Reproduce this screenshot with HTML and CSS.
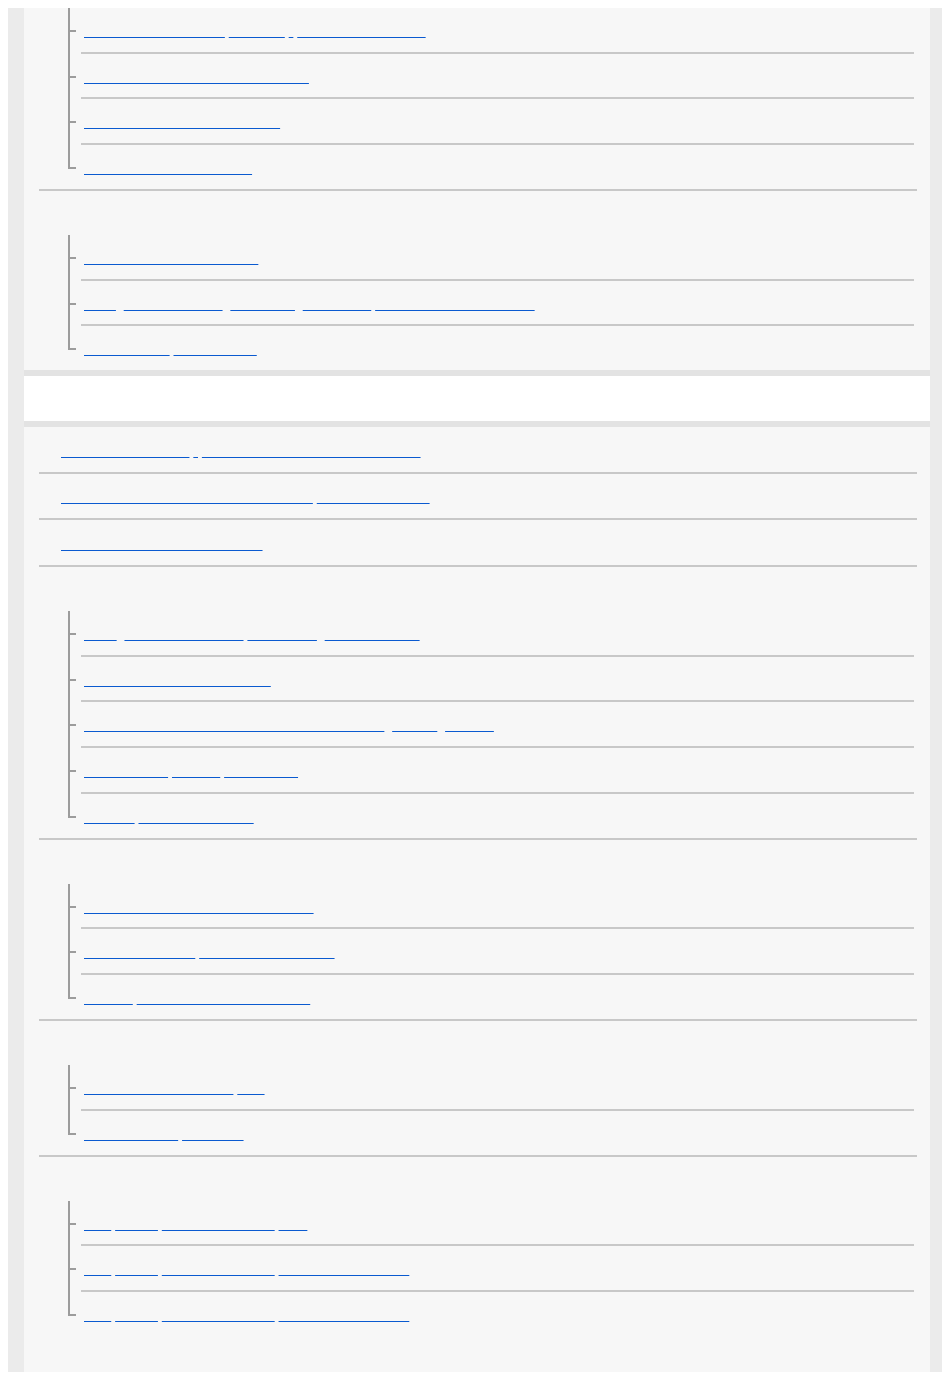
FILE: index.html
```html
<!DOCTYPE html>
<html lang="en">
<head>
  <meta charset="UTF-8">
  <meta name="viewport" content="width=device-width, initial-scale=1.0">
  <title>Help Guide - Contents</title>
  <link rel="stylesheet" href="styles.css">
</head>
<body>

  <div class="page">

    <div class="panel">
      <ul class="groups">
        <li class="group">
          <ul class="tree">
            <li><a href="#"><span>Registering Frequently</span> <span>functions</span> <span>-</span> <span>Custom Key settings</span></a></li>
            <li><a href="#"><span>Assigning selected functions to keys</span></a></li>
            <li><a href="#"><span>Using the Fn (Function) buttons</span></a></li>
            <li><a href="#"><span>Using the MENU button list</span></a></li>
          </ul>
        </li>
        <li class="group">
          <div class="group-title">Shooting modes</div>
          <ul class="tree">
            <li><a href="#"><span>Selecting a Shooting modes</span></a></li>
            <li><a href="#"><span>iAuto</span>, <span>Intelligent Autos</span>, <span>Panorama</span>, <span>Landscape</span> <span>Shutter Speed Priority (S)</span></a></li>
            <li><a href="#"><span>Program Auto</span> <span>Movie modes</span></a></li>
          </ul>
        </li>
      </ul>
    </div>

    <div class="band">Using network functions</div>

    <div class="panel panel-bottom">
      <ul class="groups">
        <li class="group link-row"><a href="#"><span>Changing the setting</span> <span>-</span> <span>Reset all camera setting to defaults</span></a></li>
        <li class="group link-row"><a href="#"><span>Using The camera with your smartphone</span> <span>Remote shootings</span></a></li>
        <li class="group link-row"><a href="#"><span>Use the camera with a computer</span></a></li>
        <li class="group">
          <div class="group-title">Connecting to a smartphone</div>
          <ul class="tree">
            <li><a href="#"><span>Wi-Fi</span>, <span>Link to smartphone</span> <span>Bluetooth®</span>, <span>Remote control</span></a></li>
            <li><a href="#"><span>Sending image to smartphone</span></a></li>
            <li><a href="#"><span>Using the smartphone as a Remote Commander</span>, <span>Record</span>, <span>Viewing</span></a></li>
            <li><a href="#"><span>Location data</span> <span>settings</span> <span>smartphone</span></a></li>
            <li><a href="#"><span>Settings</span> <span>the date and times</span></a></li>
          </ul>
        </li>
        <li class="group">
          <div class="group-title">Connecting to a computer</div>
          <ul class="tree">
            <li><a href="#"><span>Connecting the camera to computers</span></a></li>
            <li><a href="#"><span>Importing pictures</span> <span>to your Mac computer</span></a></li>
            <li><a href="#"><span>Viewing</span> <span>the images on the computer</span></a></li>
          </ul>
        </li>
        <li class="group">
          <div class="group-title">Appendix</div>
          <ul class="tree">
            <li><a href="#"><span>Compatible Accessories</span> <span>data</span></a></li>
            <li><a href="#"><span>Camera details</span> <span>and notes</span></a></li>
          </ul>
        </li>
        <li class="group">
          <div class="group-title">Troubleshooting</div>
          <ul class="tree">
            <li><a href="#"><span>Also</span> <span>Details</span> <span>about the problem</span> <span>refer</span></a></li>
            <li><a href="#"><span>Also</span> <span>Details</span> <span>about the problem</span> <span>the lists of messages</span></a></li>
            <li><a href="#"><span>Also</span> <span>Details</span> <span>about the problem</span> <span>the lists of messages</span></a></li>
          </ul>
        </li>
      </ul>
    </div>

  </div>

</body>
</html>
```

FILE: styles.css
```css
* {
  box-sizing: border-box;
}

body {
  margin: 8px;
  font-family: "Liberation Sans", Arial, sans-serif;
  font-size: 14px;
  background: #fff;
}

ul {
  list-style: none;
  margin: 0;
  padding: 0;
}

a {
  color: transparent;
  text-decoration: none;
}

a span {
  text-decoration: underline;
  text-decoration-color: #0a5ad0;
  text-decoration-skip-ink: none;
  text-underline-offset: 2.5px;
}

.page {
  background: #ebebeb;
  padding: 0 12px 0 16px;
}

.panel {
  background: #f7f7f7;
}

.panel-bottom {
  padding-bottom: 36px;
}

.band {
  height: 57px;
  background: #fff;
  border-top: 6px solid #e3e3e3;
  border-bottom: 6px solid #e3e3e3;
  color: transparent;
}

.group {
  margin: 0 13px 0 15px;
  border-bottom: 2px solid #c8c8c8;
}

.group:last-child {
  border-bottom: none;
}

.group-title {
  padding: 12px 0 12px 22px;
  line-height: 20px;
  color: transparent;
}

.link-row {
  padding: 11.5px 0 13px 22px;
  line-height: 20px;
}

.tree {
  margin-left: 29px;
}

.tree li {
  position: relative;
  margin: 0 3px 0 13px;
  padding: 11px 0 12.7px 3px;
  line-height: 20px;
  border-bottom: 2px solid #c8c8c8;
}

.tree li:last-child {
  padding-bottom: 13px;
  border-bottom: none;
}

/* tree connector lines */
.tree li::before {
  content: "";
  position: absolute;
  left: -13px;
  top: 0;
  bottom: -2px;
  width: 2px;
  background: #9c9c9c;
}

.tree li:last-child::before {
  bottom: auto;
  height: 24px;
}

.tree li::after {
  content: "";
  position: absolute;
  left: -13px;
  top: 22px;
  width: 8px;
  height: 2px;
  background: #9c9c9c;
}
```
